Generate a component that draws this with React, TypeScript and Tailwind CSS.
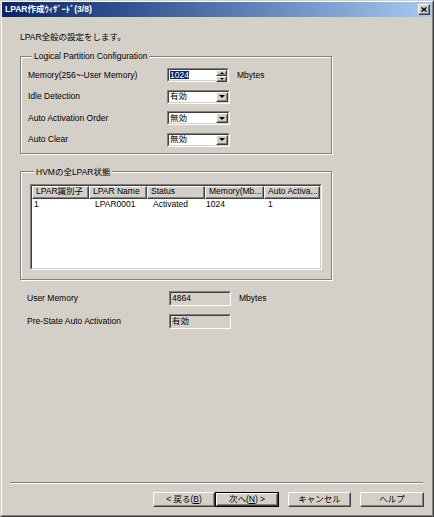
import React from "react";

type BoxProps = { className?: string; innerClass?: string; children?: React.ReactNode };

function Sunken({ className = "", innerClass = "", children }: BoxProps) {
  return (
    <div className={`border border-t-[#808080] border-l-[#808080] border-r-white border-b-white ${className}`}>
      <div className={`h-full border border-t-[#404040] border-l-[#404040] border-r-[#D4D0C8] border-b-[#D4D0C8] ${innerClass}`}>
        {children}
      </div>
    </div>
  );
}

function Raised({ className = "", innerClass = "", children }: BoxProps) {
  return (
    <div className={`bg-[#D4D0C8] border border-t-white border-l-white border-r-[#404040] border-b-[#404040] ${className}`}>
      <div className={`h-full border border-t-[#D4D0C8] border-l-[#D4D0C8] border-r-[#808080] border-b-[#808080] ${innerClass}`}>
        {children}
      </div>
    </div>
  );
}

function DownTri({ w = 7, h = 4 }: { w?: number; h?: number }) {
  return (
    <svg width={w} height={h} viewBox={`0 0 ${w} ${h}`}>
      <polygon points={`0,0 ${w},0 ${w / 2},${h}`} fill="#000" />
    </svg>
  );
}

function UpTri({ w = 5, h = 3 }: { w?: number; h?: number }) {
  return (
    <svg width={w} height={h} viewBox={`0 0 ${w} ${h}`}>
      <polygon points={`0,${h} ${w},${h} ${w / 2},0`} fill="#000" />
    </svg>
  );
}

function Dropdown({ value }: { value: string }) {
  return (
    <Sunken className="w-[63px] h-[14px]" innerClass="bg-white flex">
      <div className="flex-1 flex items-center pl-[1px]">{value}</div>
      <Raised className="w-[12px]" innerClass="flex items-center justify-center">
        <DownTri w={6} h={3} />
      </Raised>
    </Sunken>
  );
}

function Spinbox() {
  return (
    <Sunken className="w-[62px] h-[14px]" innerClass="bg-white flex">
      <div className="flex-1 flex items-center pl-[1px]">
        <span className="bg-[#0A246A] text-white">1024</span>
      </div>
      <div className="w-[11px] flex flex-col">
        <Raised className="flex-1" innerClass="flex items-center justify-center">
          <UpTri w={4} h={2} />
        </Raised>
        <Raised className="flex-1" innerClass="flex items-center justify-center">
          <DownTri w={4} h={2} />
        </Raised>
      </div>
    </Sunken>
  );
}

function ReadOnly({ value }: { value: string }) {
  return (
    <Sunken className="w-[62px] h-[15px]" innerClass="bg-[#D4D0C8] pl-[1px] pt-[1px]">
      {value}
    </Sunken>
  );
}

function Button({ children, def = false, w }: { children: React.ReactNode; def?: boolean; w: string }) {
  const inner = (
    <Raised className="h-full" innerClass="flex items-center justify-center">
      {children}
    </Raised>
  );
  return def ? (
    <div className={`h-[15px] border border-black ${w}`}>{inner}</div>
  ) : (
    <div className={`h-[15px] ${w}`}>{inner}</div>
  );
}

const cols = [
  { label: "LPAR識別子", w: "w-[57px]", v: "1", pad: "pl-[2px]" },
  { label: "LPAR Name", w: "w-[58px]", v: "LPAR0001", pad: "pl-[6px]" },
  { label: "Status", w: "w-[58px]", v: "Activated", pad: "pl-[6px]" },
  { label: "Memory(Mb...", w: "w-[59px]", v: "1024", pad: "pl-[1px]" },
  { label: "Auto Activa...", w: "w-[56px]", v: "1", pad: "pl-[4px]" },
];

export default function App() {
  return (
    <div className="w-[434px] h-[517px] bg-[#D4D0C8] text-black text-[8.5px] leading-none font-['Liberation_Sans','Noto_Sans_CJK_JP',sans-serif] border border-t-[#D4D0C8] border-l-[#D4D0C8] border-r-[#404040] border-b-[#404040]">
      <div className="h-full flex flex-col border border-t-white border-l-white border-r-[#808080] border-b-[#808080]">
        {/* Title bar */}
        <div className="h-[15px] shrink-0 flex items-center justify-between bg-linear-to-r from-[#0A246A] to-[#A6CAF0] pl-[3px] pr-[2px]">
          <span className="text-white font-bold">LPAR作成ｳｨｻﾞｰﾄﾞ(3/8)</span>
          <Raised className="w-[12px] h-[11px]" innerClass="flex items-center justify-center">
            <svg width="6" height="5" viewBox="0 0 6 5">
              <path d="M0.5 0.5 L5.5 4.5 M5.5 0.5 L0.5 4.5" stroke="#000" strokeWidth="1.4" />
            </svg>
          </Raised>
        </div>

        {/* Body */}
        <div className="flex-1 flex flex-col pl-[18px]">
          <div className="mt-[15px] h-[10px] flex items-center">LPAR全般の設定をします。</div>

          {/* Group 1 */}
          <fieldset className="mt-[9px] w-[312px] border border-[#808080] shadow-[inset_1px_1px_0_#fff,1px_1px_0_#fff] pl-[7px] pt-[7px] pb-[6px]">
            <legend className="ml-[4px] px-[2px] leading-[10px] bg-[#D4D0C8]">Logical Partition Configuration</legend>
            <div className="flex flex-col gap-[7.5px]">
              <div className="flex items-center h-[14px]">
                <div className="w-[139px]">Memory(256~-User Memory)</div>
                <Spinbox />
                <div className="ml-[8px]">Mbytes</div>
              </div>
              <div className="flex items-center h-[14px]">
                <div className="w-[139px]">Idle Detection</div>
                <Dropdown value="有効" />
              </div>
              <div className="flex items-center h-[14px]">
                <div className="w-[139px]">Auto Activation Order</div>
                <Dropdown value="無効" />
              </div>
              <div className="flex items-center h-[14px]">
                <div className="w-[139px]">Auto Clear</div>
                <Dropdown value="無効" />
              </div>
            </div>
          </fieldset>

          {/* Group 2 */}
          <fieldset className="mt-[13px] w-[312px] border border-[#808080] shadow-[inset_1px_1px_0_#fff,1px_1px_0_#fff] pl-[9px] pt-[7px] pb-[9px]">
            <legend className="ml-[4px] px-[2px] leading-[10px] bg-[#D4D0C8]">HVMの全LPAR状態</legend>
            <Sunken className="w-[292px] h-[86px]" innerClass="bg-white overflow-hidden">
              <div className="flex h-[13px]">
                {cols.map((c) => (
                  <div key={c.label} className={`${c.w} shrink-0 h-full bg-[#D4D0C8] border border-t-white border-l-white border-r-[#404040] border-b-[#404040]`}>
                    <div className="h-full border-r border-b border-r-[#808080] border-b-[#808080] pl-[3px] flex items-center whitespace-nowrap overflow-hidden">
                      {c.label}
                    </div>
                  </div>
                ))}
              </div>
              <div className="flex h-[11px] items-center">
                {cols.map((c) => (
                  <div key={c.label} className={`${c.w} ${c.pad} shrink-0 whitespace-nowrap`}>
                    {c.v}
                  </div>
                ))}
              </div>
            </Sunken>
          </fieldset>

          {/* Bottom info */}
          <div className="mt-[11px] flex flex-col gap-[8px]">
            <div className="flex items-center h-[15px]">
              <div className="w-[149px] pl-[7px]">User Memory</div>
              <ReadOnly value="4864" />
              <div className="ml-[8px]">Mbytes</div>
            </div>
            <div className="flex items-center h-[15px]">
              <div className="w-[149px] pl-[7px]">Pre-State Auto Activation</div>
              <ReadOnly value="有効" />
            </div>
          </div>
        </div>

        {/* Footer */}
        <div className="shrink-0 pb-[8px]">
          <div className="ml-[8px] w-[413px] h-[2px] border-t border-b border-t-[#808080] border-b-white" />
          <div className="mt-[8px] flex justify-end pr-[8px]">
            <Button w="w-[62px]">
              <span>&lt; 戻る(<span className="underline">B</span>)</span>
            </Button>
            <Button w="w-[64px]" def>
              <span>次へ(<span className="underline">N</span>) &gt;</span>
            </Button>
            <div className="w-[9px]" />
            <Button w="w-[63px]">キャンセル</Button>
            <div className="w-[9px]" />
            <Button w="w-[64px]">ヘルプ</Button>
          </div>
        </div>
      </div>
    </div>
  );
}
